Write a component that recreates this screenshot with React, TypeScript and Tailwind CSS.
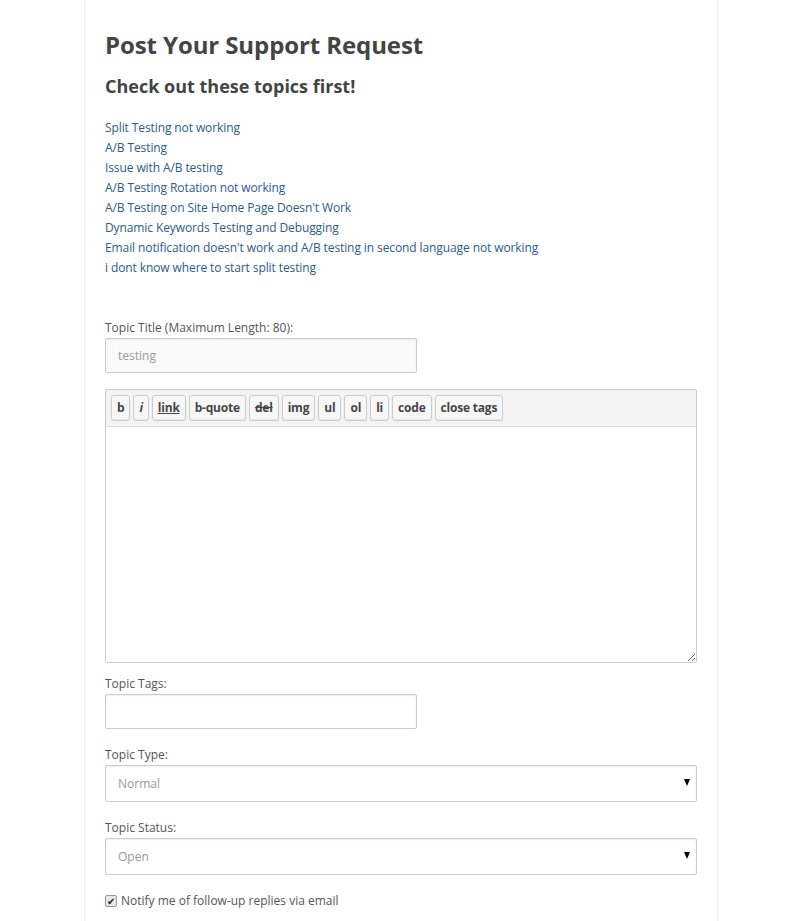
import React from 'react';

const topics = [
  'Split Testing not working',
  'A/B Testing',
  'Issue with A/B testing',
  'A/B Testing Rotation not working',
  "A/B Testing on Site Home Page Doesn't Work",
  'Dynamic Keywords Testing and Debugging',
  "Email notification doesn't work and A/B testing in second language not working",
  'i dont know where to start split testing',
];

const tools = ['b', 'i', 'link', 'b-quote', 'del', 'img', 'ul', 'ol', 'li', 'code', 'close tags'];

function ToolButton({ label }: { label: string }) {
  let extra = '';
  if (label === 'i') extra = 'italic';
  if (label === 'link') extra = 'underline';
  if (label === 'del') extra = 'line-through';
  return (
    <button
      type="button"
      className={`h-[26px] px-[5px] rounded-[3px] border border-[#cccccc] bg-[#f7f7f7] text-[12px] font-bold text-[#464646] leading-none tracking-[-0.2px] shadow-[inset_0_-1px_0_#e6e6e6] ${extra}`}
    >
      {label}
    </button>
  );
}

function Select({ value }: { value: string }) {
  return (
    <div className="relative w-[592px] h-[37px] border border-[#cccccc] rounded-[2px] bg-white shadow-[inset_0_1px_2px_rgba(0,0,0,0.07)]">
      <div className="h-full flex items-center pl-[12px] text-[12px] text-[#999999]">{value}</div>
      {/* dropdown arrow */}
      <span className="absolute right-[6px] top-[13px] w-0 h-0 border-l-[3.5px] border-r-[3.5px] border-t-[7px] border-l-transparent border-r-transparent border-t-black" />
    </div>
  );
}

export default function App() {
  return (
    <div className="min-h-screen bg-white" style={{ fontFamily: '"Open Sans", "Liberation Sans", sans-serif' }}>
      <div className="ml-[84px] w-[634px] min-h-[921px] border-x border-[#eeeeee] px-[20px] pt-[28px] text-[#444444]">
        <h1 className="text-[24px] font-bold leading-[34px] tracking-[-0.1px] text-[#444444]">Post Your Support Request</h1>
        <h3 className="mt-[11px] text-[18px] font-bold leading-[26px] text-[#444444]">Check out these topics first!</h3>

        <ul className="mt-[19px] text-[12px] leading-[20px] tracking-[-0.1px]">
          {topics.map((t) => (
            <li key={t}>
              <a href="#" className="text-[#2b5c8a]">{t}</a>
            </li>
          ))}
        </ul>

        <form className="mt-[40px]">
          <label className="block text-[12px] leading-[20px] text-[#555555]">Topic Title (Maximum Length: 80):</label>
          <div className="w-[312px] h-[35px] border border-[#cccccc] rounded-[2px] bg-[#fafafa] flex items-center pl-[12px] text-[12px] text-[#999999] shadow-[inset_0_1px_2px_rgba(0,0,0,0.07)]">
            testing
          </div>

          <div className="mt-[16px] w-[592px] border border-[#cccccc] rounded-[2px]">
            <div className="h-[37px] bg-[#f3f3f3] border-b border-[#dddddd] flex items-center gap-[3px] pl-[5px]">
              {tools.map((t) => (
                <ToolButton key={t} label={t} />
              ))}
            </div>
            <textarea className="block w-full h-[235px] bg-white outline-none resize-y p-2" />
          </div>

          <label className="mt-[11px] block text-[12px] leading-[20px] text-[#555555]">Topic Tags:</label>
          <div className="w-[312px] h-[35px] border border-[#cccccc] rounded-[2px] bg-white shadow-[inset_0_1px_2px_rgba(0,0,0,0.07)]" />

          <label className="mt-[16px] block text-[12px] leading-[20px] text-[#555555]">Topic Type:</label>
          <Select value="Normal" />

          <label className="mt-[16px] block text-[12px] leading-[20px] text-[#555555]">Topic Status:</label>
          <Select value="Open" />

          <div className="mt-[17px] flex items-center gap-[4px] text-[12px] text-[#555555]">
            <span className="w-[12px] h-[12px] border border-[#999999] rounded-[2px] bg-[#e8e8e8] flex items-center justify-center text-[10px] leading-none text-[#222222]">
              ✔
            </span>
            <span>Notify me of follow-up replies via email</span>
          </div>
        </form>
      </div>
    </div>
  );
}
